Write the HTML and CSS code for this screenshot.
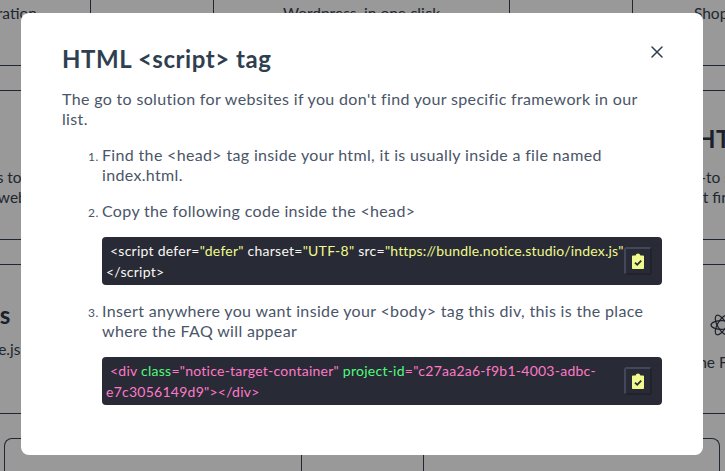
FILE: index.html
```html
<!DOCTYPE html>
<html lang="en">
<head>
<meta charset="utf-8">
<title>HTML script tag</title>
<link rel="stylesheet" href="styles.css">
</head>
<body>
<div class="page">
  <div class="row row-top">
    <div class="cell"><p class="cell-text">Simple Webflow integration</p></div>
    <div class="cell"><p class="cell-text">Wordpress, in one click</p></div>
    <div class="cell"><p class="cell-text">Shopify store, in one click</p></div>
  </div>
  <div class="spacer"></div>
  <div class="row row-mid">
    <div class="cell">
      <h3 class="cell-title">Webflow</h3>
      <p class="cell-text">Integrate FAQ seamless to an</p>
      <p class="cell-text">Add Notice FAQ on your websites</p>
    </div>
    <div class="cell"></div>
    <div class="cell">
      <h3 class="cell-title">HTML &lt;script&gt;</h3>
      <p class="cell-text">The go-to solution for websites if you</p>
      <p class="cell-text">if you don't find your specific framework in our</p>
    </div>
  </div>
  <div class="spacer"></div>
  <div class="row row-low">
    <div class="cell">
      <h3 class="cell-title">Next.js apps</h3>
      <p class="cell-text">Use it inside of Node.js</p>
    </div>
    <div class="cell"></div>
    <div class="cell">
      <h3 class="cell-title react-title">
        <svg class="react-icon" viewBox="0 0 24 24" fill="none" stroke="currentColor" stroke-width="1.2">
          <ellipse cx="12" cy="12" rx="11" ry="4.4"/>
          <ellipse cx="12" cy="12" rx="11" ry="4.4" transform="rotate(60 12 12)"/>
          <ellipse cx="12" cy="12" rx="11" ry="4.4" transform="rotate(120 12 12)"/>
        </svg>
        <span>React app</span>
      </h3>
      <p class="cell-text">Use the FAQ inside your React app</p>
    </div>
  </div>
  <div class="spacer-last"></div>
  <div class="table-wrap">
    <div class="table-card">
      <div class="table-cell table-first"></div>
      <div class="table-cell table-second"></div>
      <div class="table-cell"></div>
    </div>
  </div>
</div>

<div class="overlay">
  <div class="modal">
    <div class="modal-head">
      <h2 class="modal-title">HTML &lt;script&gt; tag</h2>
      <svg class="close" viewBox="0 0 12 12" fill="none" stroke="currentColor" stroke-width="1.5" stroke-linecap="round">
        <path d="M1 1l10 10M11 1L1 11"/>
      </svg>
    </div>
    <p class="intro">The go to solution for websites if you don't find your specific framework in our list.</p>
    <ol class="steps">
      <li>Find the &lt;head&gt; tag inside your html, it is usually inside a file named index.html.</li>
      <li>Copy the following code inside the &lt;head&gt;
        <div class="code">
          <button class="copy" type="button">
            <svg viewBox="0 0 12 16" width="12" height="16">
              <path class="clip" d="M1 2.5h2.6C3.8 1.2 4.8.4 6 .4s2.2.8 2.4 2.1H11c.6 0 1 .4 1 1V15c0 .6-.4 1-1 1H1c-.6 0-1-.4-1-1V3.5c0-.6.4-1 1-1z"/>
              <path class="tick" d="M3 9.6l2.2 2.2L9.2 7.6" />
            </svg>
          </button>
          <span>&lt;script defer=</span><span class="str">"defer"</span><span> charset=</span><span class="str">"UTF-8"</span><span> src=</span><span class="str url">"https://bundle.notice.studio/index.js"</span><br><span>&lt;/script&gt;</span>
        </div>
      </li>
      <li>Insert anywhere you want inside your &lt;body&gt; tag this div, this is the place where the FAQ will appear
        <div class="code">
          <button class="copy" type="button">
            <svg viewBox="0 0 12 16" width="12" height="16">
              <path class="clip" d="M1 2.5h2.6C3.8 1.2 4.8.4 6 .4s2.2.8 2.4 2.1H11c.6 0 1 .4 1 1V15c0 .6-.4 1-1 1H1c-.6 0-1-.4-1-1V3.5c0-.6.4-1 1-1z"/>
              <path class="tick" d="M3 9.6l2.2 2.2L9.2 7.6" />
            </svg>
          </button>
          <span class="tag">&lt;div </span><span class="attr">class</span><span class="tag">="notice-target-container" </span><span class="attr">project-id</span><span class="tag">="c27aa2a6-f9b1-4003-adbc-<br>e7c3056149d9"&gt;&lt;/div&gt;</span>
        </div>
      </li>
    </ol>
  </div>
</div>
</body>
</html>
```

FILE: styles.css
```css
* { box-sizing: border-box; }

html, body {
  margin: 0;
  height: 471px;
  overflow: hidden;
  background: #fff;
}

body {
  font-family: "Lato", "Noto Sans", sans-serif;
  font-size: 16px;
  color: #374151;
}

.page {
  width: 1135px;
  margin-left: -206px;
  height: 471px;
  overflow: hidden;
}

.row {
  display: flex;
  gap: 122px;
  border-bottom: 1px solid #374151;
}

.row-top { height: 66px; }
.row-mid { height: 149px; }
.row-low { height: 149px; }

.spacer {
  height: 25px;
  border-bottom: 1px solid #374151;
}

.spacer-last { height: 24px; }

.cell {
  width: 297px;
  flex: none;
  text-align: center;
}

.row-top .cell {
  border-left: 1px solid #374151;
  border-right: 1px solid #374151;
  padding-top: 3px;
}

.row-mid .cell { padding-top: 33px; }
.row-low .cell { padding-top: 35px; }

.cell-title {
  margin: 0 0 13px;
  font-size: 24px;
  line-height: 30px;
  font-weight: 700;
  letter-spacing: 0.5px;
  color: #2d3748;
}

.row-low .cell-title { margin-bottom: 9px; }

.cell-text {
  margin: 0;
  font-size: 15.5px;
  line-height: 20px;
  white-space: nowrap;
}

.row-low .react-title {
  display: flex;
  align-items: center;
  justify-content: center;
  gap: 8px;
  margin: 10px 0 12px;
}

.react-icon {
  width: 24px;
  height: 24px;
}

.table-wrap { padding: 0 209px 0 210px; }

.table-card {
  display: flex;
  height: 60px;
  border: 1px solid #374151;
  border-bottom: 0;
  border-radius: 8px 8px 0 0;
}

.table-first {
  width: 297px;
  flex: none;
  border-right: 1px solid #374151;
}

.table-second {
  width: 122px;
  flex: none;
  border-right: 1px solid #374151;
}

.overlay {
  position: fixed;
  inset: 0;
  padding: 13px 22px 0 21px;
  background: rgba(0, 0, 0, 0.4);
}

.modal {
  height: 442px;
  padding: 31px 41px 0;
  background: #fff;
  border-radius: 8px;
}

.modal-head {
  display: flex;
  justify-content: space-between;
  align-items: flex-start;
  height: 30px;
}

.modal-title {
  margin: 0;
  font-size: 24px;
  line-height: 30px;
  font-weight: 700;
  letter-spacing: 0.55px;
  color: #2f3f4f;
}

.close {
  width: 12px;
  height: 12px;
  margin: 2px -1px 0 0;
  color: #2f3f4f;
}

.intro {
  margin: 15px 0 0;
  line-height: 20px;
  letter-spacing: 0.34px;
  color: #4a5568;
}

.steps {
  margin: 16px 0 0;
  padding: 0 0 0 40px;
  line-height: 20px;
  letter-spacing: 0.34px;
  color: #4a5568;
}

.steps li { margin-bottom: 16px; }
.steps li::marker { font-size: 12px; }

.code {
  margin-top: 16px;
  padding: 3px 4px 0;
  min-height: 48px;
  background: #282a36;
  border-radius: 4px;
  color: #f8f8f2;
  font-size: 14px;
  line-height: 21px;
  text-indent: 4px;
  letter-spacing: 0.25px;
}

.copy {
  float: right;
  width: 28px;
  height: 28px;
  margin: 7px 6px 0 -8px;
  padding: 0;
  display: flex;
  align-items: center;
  justify-content: center;
  background: #282a36;
  border: 2px solid;
  border-color: #44475a #21222c #21222c #44475a;
  border-radius: 3px;
}

.clip { fill: #f1fa8c; }

.tick {
  fill: none;
  stroke: #282a36;
  stroke-width: 1.8;
}

.str { color: #f1fa8c; }
.url { letter-spacing: 0.17px; }
.tag { color: #ff79c6; }
.attr { color: #50fa7b; }
```
